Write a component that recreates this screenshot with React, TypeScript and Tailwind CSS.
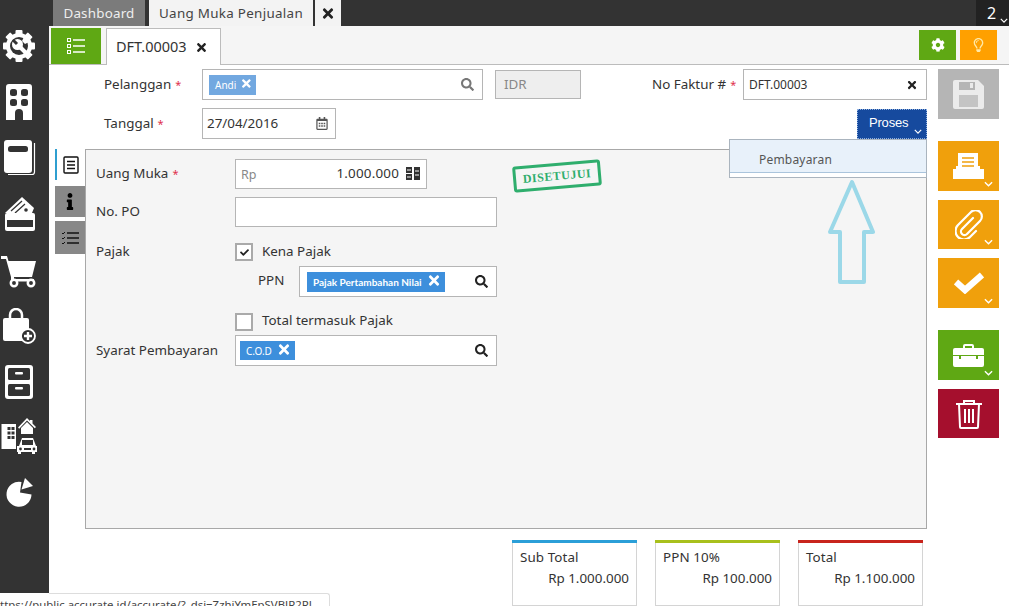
import { FC, ReactNode } from 'react';
import { FaTimes, FaSearch, FaCog, FaRegLightbulb, FaCheck, FaInfo, FaRegCalendarAlt } from 'react-icons/fa';

const D = '#333333';

const Gear: FC = () => (
  <svg viewBox="0 0 36 36" className="w-[36px] h-[36px]" fill="#fff">
    {[0, 45, 90, 135, 180, 225, 270, 315].map((a) => (
      <rect key={a} x="14.500" y="2" width="7" height="7" rx="1" transform={`rotate(${a} 18 18)`} />
    ))}
    <circle cx="18" cy="18" r="13" />
    <circle cx="18" cy="18" r="9" fill={D} />
    <circle cx="16.500" cy="16.500" r="5.500" />
    <path d="M17 17l8 8" stroke="#fff" strokeWidth="4" />
    <path d="M12 12l4 4" stroke={D} strokeWidth="3" />
    <path d="M23 9l5 5-4 2-3-3z" />
  </svg>
);

const Building: FC = () => (
  <svg viewBox="0 0 36 36" className="w-[36px] h-[36px]">
    <path d="M8 0h20a3 3 0 0 1 3 3v33H22v-7a4 4 0 0 0-8 0v7H5V3a3 3 0 0 1 3-3z" fill="#fff" />
    <rect x="9" y="5" width="7" height="7" rx="2.500" fill={D} />
    <rect x="20" y="5" width="7" height="7" rx="2.500" fill={D} />
    <rect x="9" y="15" width="7" height="7" rx="2.500" fill={D} />
    <rect x="20" y="15" width="7" height="7" rx="2.500" fill={D} />
  </svg>
);

const Book: FC = () => (
  <svg viewBox="0 0 36 36" className="w-[36px] h-[36px]">
    <path d="M6 0h22a3 3 0 0 1 3 3v27a3 3 0 0 1-3 3H6a3 3 0 0 1-3-3V3a3 3 0 0 1 3-3z" fill="#fff" />
    <rect x="7" y="6" width="20" height="6" rx="2.500" fill={D} />
    <path d="M33.500 3v29a2.500 2.500 0 0 1-2.500 2.500H7" stroke="#fff" strokeWidth="1.200" fill="none" />
  </svg>
);

const Wallet: FC = () => (
  <svg viewBox="0 0 36 36" className="w-[36px] h-[36px]">
    <path d="M4 17L21 1l12 11-2 5z" fill="#fff" />
    <path d="M10 15L21 5M14 17l10-9" stroke={D} strokeWidth="1.300" />
    <circle cx="25" cy="14" r="1.800" fill={D} />
    <path d="M6 17h26a2 2 0 0 1 2 2v14a2 2 0 0 1-2 2H6a2 2 0 0 1-2-2V19a2 2 0 0 1 2-2z" fill="#fff" />
    <rect x="6" y="24" width="26" height="7" fill={D} />
  </svg>
);

const Cart: FC = () => (
  <svg viewBox="0 0 36 36" className="w-[36px] h-[36px]" fill="#fff">
    <path d="M0 4h6l1.500 5H35l-4 16H13v2h20v2.500H10V25L5 7H0z" />
    <circle cx="13" cy="31" r="3.200" fill={D} stroke="#fff" strokeWidth="2.500" />
    <circle cx="30" cy="31" r="3.200" fill={D} stroke="#fff" strokeWidth="2.500" />
  </svg>
);

const Bag: FC = () => (
  <svg viewBox="0 0 36 36" className="w-[36px] h-[36px]">
    <path d="M9 10V7a6 6 0 0 1 12 0v3" stroke="#fff" strokeWidth="2.500" fill="none" />
    <path d="M4 10h22a2 2 0 0 1 2 2v21H4a2 2 0 0 1-2-2V12a2 2 0 0 1 2-2z" fill="#fff" />
    <circle cx="27" cy="28" r="7" fill={D} stroke="#fff" strokeWidth="1.800" />
    <path d="M27 24v8M23 28h8" stroke="#fff" strokeWidth="2.400" />
  </svg>
);

const Cabinet: FC = () => (
  <svg viewBox="0 0 36 36" className="w-[36px] h-[36px]">
    <rect x="4" y="1" width="28" height="34" rx="3" fill="#fff" />
    <rect x="7" y="4" width="22" height="12" rx="1.500" fill={D} />
    <rect x="7" y="20" width="22" height="12" rx="1.500" fill={D} />
    <rect x="14" y="8" width="8" height="2.500" rx="1" fill="#fff" />
    <rect x="14" y="23" width="8" height="2.500" rx="1" fill="#fff" />
  </svg>
);

const Assets: FC = () => (
  <svg viewBox="0 0 36 36" className="w-[36px] h-[36px] overflow-visible" fill="#fff">
    <rect x="0.500" y="4" width="14.500" height="25" />
    {[6.500, 10.500].map((x) =>
      [7, 11.500, 16].map((y) => <rect key={`${x}-${y}`} x={x} y={y} width="3" height="3" fill={D} />),
    )}
    <path d="M17 7.500L26 -2l3 3v-1h2.500v3.500l3.500 3.500-1.200 1.200L26 0.500 18.200 8.700z" />
    <path d="M20 8l6-6 6 6v6H20z" />
    <path d="M21 18h11l3 8h1v6h-2v2h-3v-2H20v2h-3v-2h-1v-6h2z" />
    <rect x="21" y="20" width="11" height="5" fill={D} />
    <circle cx="19.500" cy="29" r="1.400" fill={D} />
    <circle cx="33" cy="29" r="1.400" fill={D} />
    <rect x="23" y="28" width="7" height="2" fill={D} />
  </svg>
);

const Pie: FC = () => (
  <svg viewBox="0 0 36 36" className="w-[36px] h-[36px]" fill="#fff">
    <path d="M19 16.500L20.500 6A12.500 12.500 0 1 0 30.500 18.500z" />
    <path d="M20.500 13.500L24 2l8 8z" />
  </svg>
);

const Chevron: FC<{ className?: string }> = ({ className }) => (
  <svg viewBox="0 0 10 6" className={className} fill="none" stroke="#fff" strokeWidth="1.500">
    <path d="M1 1l4 4 4-4" />
  </svg>
);

const ListIcon: FC<{ color: string; size: number }> = ({ color, size }) => (
  <svg viewBox="0 0 18 16" width={size} height={(size * 16) / 18} fill="none" stroke={color}>
    <rect x=".5" y=".5" width="3" height="3" strokeWidth="1" />
    <rect x=".5" y="6.500" width="3" height="3" strokeWidth="1" />
    <rect x=".5" y="12.500" width="3" height="3" strokeWidth="1" />
    <path d="M6 2h12M6 8h12M6 14h12" strokeWidth="1.500" />
  </svg>
);

const ActionBtn: FC<{ bg: string; h: string; chevron?: boolean; children: ReactNode }> = ({ bg, h, chevron = true, children }) => (
  <div className={`relative w-[61px] flex items-center justify-center ${bg} ${h}`}>
    {children}
    {chevron && <Chevron className="absolute right-[6px] bottom-[4px] w-[9px] h-[6px]" />}
  </div>
);

const Req: FC = () => <span className="text-[#e0314b] ml-[4px] text-[11px]">*</span>;

const Tag: FC<{ label: string; bg: string; textClass?: string; className?: string }> = ({ label, bg, textClass = 'text-[10px]', className }) => (
  <div className={`h-[20px] flex items-center pl-[6px] pr-[5px] text-white ${bg} ${className ?? ''}`}>
    <span className={`${textClass} mt-[2px]`}>{label}</span>
    <FaTimes className="w-[12px] h-[15px] ml-[6px] mb-[3px]" />
  </div>
);

const Card: FC<{ title: string; value: string; color: string }> = ({ title, value, color }) => (
  <div className="w-[125px] h-[66px] bg-white border border-[#d4d4d4] border-t-0">
    <div className={`h-[3px] -mx-px ${color}`} />
    <div className="pl-[7px] pt-[5px] text-[#333] leading-[18px] tracking-[0.1px]">{title}</div>
    <div className="text-right pr-[7px] mt-[3px] text-[#333] leading-[18px]">{value}</div>
  </div>
);

export default function App() {
  return (
    <div className="relative w-[1014px] h-[606px] overflow-hidden bg-white text-[13.400px] text-[#222] font-['Noto_Sans','Open_Sans',sans-serif]">
      <div className="w-[1009px]">
        {/* top tabs */}
        <div className="h-[26px] bg-[#333] flex pl-[53px]">
          <div className="w-[92px] bg-[#7b7b7b] text-[#eee] flex items-center justify-center tracking-[0.2px]">Dashboard</div>
          <div className="w-[164px] ml-[4px] bg-[#f3f3f3] text-[#444] flex items-center justify-center tracking-[0.3px]">Uang Muka Penjualan</div>
          <div className="w-[26px] ml-[2px] bg-[#f3f3f3] flex items-center justify-center">
            <FaTimes className="w-[12px] h-[15px] text-[#222]" />
          </div>
          <div className="ml-auto w-[33px] bg-[#222] text-white flex items-start pl-[11px] pt-[1px] text-[16px] relative">
            2
            <Chevron className="absolute right-[1px] bottom-[3px] w-[8px] h-[5px]" />
          </div>
        </div>

        <div className="flex h-[580px]">
          {/* sidebar */}
          <div className="w-[49px] h-[567px] bg-[#333] flex flex-col items-start gap-[20px] pl-[1px] pt-[2px] shrink-0">
            <Gear />
            <Building />
            <Book />
            <Wallet />
            <Cart />
            <Bag />
            <Cabinet />
            <Assets />
            <Pie />
          </div>

          <div className="flex-1 min-w-0">
            {/* toolbar strip */}
            <div className="h-[39px] bg-[#f5f5f5] border-b border-[#bcbcbc] flex items-start pl-[2px] pt-[2px]">
              <div className="w-[50px] h-[36px] bg-[#5fa814] flex items-center justify-center">
                <ListIcon color="#fff" size={18} />
              </div>
              <div className="ml-[5px] w-[115px] h-[37px] bg-white border border-[#bcbcbc] border-b-0 flex items-center pl-[9px]">
                <span className="text-[#333] text-[14.500px]">DFT.00003</span>
                <FaTimes className="ml-[9px] w-[11px] h-[13px] text-[#222]" />
              </div>
              <div className="ml-auto flex gap-[4px] mr-[12px] mt-[2px]">
                <div className="w-[37px] h-[30px] bg-[#5fa814] flex items-center justify-center">
                  <FaCog className="w-[14px] h-[14px] text-white" />
                </div>
                <div className="w-[37px] h-[30px] bg-[#ffa000] flex items-center justify-center">
                  <FaRegLightbulb className="w-[13px] h-[14px] text-[#ffe9a8]" />
                </div>
              </div>
            </div>

            <div className="flex">
              <div className="w-[889px] shrink-0">
                {/* header fields */}
                <div className="flex items-center h-[31px] mt-[4px] pl-[55px]">
                  <div className="w-[98px] text-[#333]">Pelanggan<Req /></div>
                  <div className="w-[281px] h-[31px] bg-white border border-[#b5b5b5] flex items-center pl-[6px] pr-[8px] justify-between">
                    <Tag label="Andi" bg="bg-[#72a8e0]" className="w-[47px]" />
                    <FaSearch className="w-[13px] h-[13px] text-[#777]" />
                  </div>
                  <div className="ml-[12px] w-[86px] h-[29px] bg-[#eee] border border-[#b5b5b5] flex items-center pl-[8px] text-[#888]">IDR</div>
                  <div className="ml-[71px] w-[91px] text-[#333] whitespace-nowrap">No Faktur #<Req /></div>
                  <div className="w-[184px] h-[31px] bg-white border border-[#b5b5b5] flex items-center pl-[5px] pr-[9px] justify-between">
                    <span className="text-[12px] text-[#333]">DFT.00003</span>
                    <FaTimes className="w-[10px] h-[12px] text-[#222]" />
                  </div>
                </div>
                <div className="flex items-center h-[31px] mt-[8px] pl-[55px]">
                  <div className="w-[98px] text-[#333]">Tanggal<Req /></div>
                  <div className="w-[134px] h-[31px] bg-white border border-[#b5b5b5] flex items-center pl-[4px] pr-[7px] justify-between">
                    <span className="text-[#333]">27/04/2016</span>
                    <FaRegCalendarAlt className="w-[12px] h-[13px] text-[#555]" />
                  </div>
                  <div className="ml-[521px] relative w-[70px] h-[30px] bg-[#164a9e] outline-1 outline-dotted outline-[#8fb0e0] -outline-offset-1 flex items-start pt-[5px] pl-[12px] text-white text-[13px] leading-[18px] tracking-[-0.2px] font-['Liberation_Sans',sans-serif]">
                    Proses
                    <Chevron className="absolute right-[5px] bottom-[5px] w-[8px] h-[5px]" />
                  </div>
                </div>

                {/* main panel */}
                <div className="flex mt-[10px] pl-[6px]">
                  <div className="w-[30px] shrink-0 flex flex-col">
                    <div className="h-[31px] bg-white border-l-2 border-[#2f9fd0] flex items-center justify-center">
                      <svg viewBox="0 0 16 18" width="16" height="18" fill="none" stroke="#111" strokeWidth="1.400">
                        <rect x="1" y="1" width="14" height="16" rx="1" />
                        <path d="M4 5.500h8M4 9h8M4 12.500h8" />
                      </svg>
                    </div>
                    <div className="h-[31px] mt-[6px] bg-[#888] flex items-center justify-center">
                      <FaInfo className="w-[10px] h-[17px] text-black" />
                    </div>
                    <div className="h-[33px] mt-[4px] bg-[#888] flex items-center justify-center">
                      <svg viewBox="0 0 18 14" width="18" height="14" fill="none" stroke="#111">
                        <path d="M6 2h12M6 7h12M6 12h12" strokeWidth="1.500" />
                        <path d="M1 2l1 1 2-2M1 7l1 1 2-2M1 12l1 1 2-2" strokeWidth="1" />
                      </svg>
                    </div>
                  </div>

                  <div className="relative w-[842px] h-[380px] bg-[#f5f5f5] border border-[#a8a8a8] pl-[10px] pt-[9px]">
                    <div className="flex items-center h-[30px]">
                      <div className="w-[139px] text-[#333] mb-[2px]">Uang Muka<Req /></div>
                      <div className="w-[192px] h-[30px] bg-[#fff] border border-[#b5b5b5] flex items-center pl-[5px] pr-[6px]">
                        <span className="text-[#888] mt-[2px] text-[12.500px]">Rp</span>
                        <span className="ml-auto mb-[2px] text-[#333] tracking-[0.2px]">1.000.000</span>
                        <svg viewBox="0 0 14 13" width="14" height="13" className="ml-[7px] mb-[2px]" fill="#333">
                          <rect x="0" y="0" width="6" height="6" />
                          <rect x="0" y="7" width="6" height="6" />
                          <rect x="8" y="0" width="6" height="13" />
                          <path d="M9 4h4M9 8h4" stroke="#fff" />
                          <path d="M1 3h4M1 10h4" stroke="#fff" />
                        </svg>
                      </div>
                    </div>
                    <div className="flex items-center h-[30px] mt-[8px]">
                      <div className="w-[139px] text-[#333] mb-[2px]">No. PO</div>
                      <div className="w-[262px] h-[30px] bg-white border border-[#b5b5b5]" />
                    </div>
                    <div className="flex items-center h-[18px] mt-[16px]">
                      <div className="w-[139px] text-[#333] mb-[2px]">Pajak</div>
                      <div className="w-[18px] h-[18px] bg-white border-2 border-[#aaa] flex items-center justify-center">
                        <FaCheck className="w-[9px] h-[9px] text-[#222]" />
                      </div>
                      <span className="ml-[9px] mb-[2px] text-[#333]">Kena Pajak</span>
                    </div>
                    <div className="flex items-center h-[31px] mt-[5px] pl-[162px]">
                      <div className="w-[41px] text-[#333] mb-[2px]">PPN</div>
                      <div className="w-[198px] h-[31px] bg-white border border-[#b5b5b5] flex items-center pl-[7px] pr-[8px] justify-between">
                        <Tag label="Pajak Pertambahan Nilai" bg="bg-[#3d8fdc]" textClass="text-[10px] font-bold font-['Lato',sans-serif] whitespace-nowrap" />
                        <FaSearch className="w-[13px] h-[13px] text-[#222]" />
                      </div>
                    </div>
                    <div className="flex items-center h-[18px] mt-[16px] pl-[139px]">
                      <div className="w-[18px] h-[18px] bg-white border-2 border-[#aaa]" />
                      <span className="ml-[9px] mb-[4px] text-[#333]">Total termasuk Pajak</span>
                    </div>
                    <div className="flex items-center h-[31px] mt-[4px]">
                      <div className="w-[139px] text-[#333] whitespace-nowrap">Syarat Pembayaran</div>
                      <div className="w-[262px] h-[31px] bg-white border border-[#b5b5b5] flex items-center pl-[4px] pr-[8px] justify-between">
                        <Tag label="C.O.D" bg="bg-[#3d8fdc]" className="!h-[19px]" />
                        <FaSearch className="w-[13px] h-[13px] text-[#222]" />
                      </div>
                    </div>

                    {/* stamp */}
                    <div className="absolute left-[427px] top-[13px] w-[88px] h-[26px] border-[3px] border-[#2fae6d] rounded-[3px] -rotate-[5deg] flex items-center justify-center text-[#2fae6d] text-[12px] font-bold tracking-[0.5px] font-['Liberation_Serif',serif]">
                      DISETUJUI
                    </div>
                  </div>
                </div>

                {/* totals */}
                <div className="flex gap-[18px] mt-[11px] pl-[463px]">
                  <Card title="Sub Total" value="Rp 1.000.000" color="bg-[#2b9fd8]" />
                  <Card title="PPN 10%" value="Rp 100.000" color="bg-[#a8c01c]" />
                  <Card title="Total" value="Rp 1.100.000" color="bg-[#c8241c]" />
                </div>
              </div>

              {/* right actions */}
              <div className="w-[61px] flex flex-col mt-[4px]">
                <ActionBtn bg="bg-[#b5b5b5]" h="h-[50px]" chevron={false}>
                  <svg viewBox="0 0 31 29" width="31" height="29">
                    <path d="M2 0h23l6 6v21a2 2 0 0 1-2 2H2a2 2 0 0 1-2-2V2a2 2 0 0 1 2-2z" fill="#ebebeb" />
                    <rect x="6" y="2" width="16" height="8" fill="#b5b5b5" />
                    <rect x="17" y="3" width="3" height="5" fill="#ebebeb" />
                    <rect x="6" y="15" width="19" height="12" fill="#c4c4c4" />
                  </svg>
                </ActionBtn>
                <div className="mt-[22px]">
                  <ActionBtn bg="bg-[#f0a00c]" h="h-[50px]">
                    <svg viewBox="0 0 31 26" width="31" height="26" fill="#fff">
                      <path d="M5 0h20v20H5z" />
                      <path d="M9 5h12M9 9h12M9 13h12" stroke="#f0a00c" strokeWidth="1.500" />
                      <path d="M0 16h3v-3h2v7h20v-7h2v3h4v10H0z" />
                    </svg>
                  </ActionBtn>
                </div>
                <div className="mt-[9px]">
                  <ActionBtn bg="bg-[#f0a00c]" h="h-[49px]">
                    <svg viewBox="0 0 28 29" width="28" height="29" fill="none" stroke="#fff" strokeWidth="2.200" strokeLinecap="round">
                      <path d="M18 8L7 19a3.500 3.500 0 0 0 5 5L25 11a6 6 0 0 0-9-9L3 15a8 8 0 0 0 12 12l6-6" />
                    </svg>
                  </ActionBtn>
                </div>
                <div className="mt-[9px]">
                  <ActionBtn bg="bg-[#f0a00c]" h="h-[50px]">
                    <svg viewBox="0 0 30 22" width="30" height="22" fill="none" stroke="#fff" strokeWidth="6.500">
                      <path d="M2 10l9 8L28 3" />
                    </svg>
                  </ActionBtn>
                </div>
                <div className="mt-[22px]">
                  <ActionBtn bg="bg-[#5fa814]" h="h-[50px]">
                    <svg viewBox="0 0 31 23" width="31" height="23" fill="#fff">
                      <path d="M10 5V2a2 2 0 0 1 2-2h7a2 2 0 0 1 2 2v3h-2V2h-7v3z" />
                      <path d="M2 4h27a2 2 0 0 1 2 2v5H0V6a2 2 0 0 1 2-2z" />
                      <path d="M0 12h6v3h2v-3h15v3h2v-3h6v9a2 2 0 0 1-2 2H2a2 2 0 0 1-2-2z" />
                    </svg>
                  </ActionBtn>
                </div>
                <div className="mt-[9px]">
                  <ActionBtn bg="bg-[#a50f2d]" h="h-[49px]" chevron={false}>
                    <svg viewBox="0 0 28 30" width="28" height="30" fill="none" stroke="#fff" strokeWidth="2">
                      <path d="M1 5h26M9 5V2h10v3" />
                      <path d="M4 5l1 23a1 1 0 0 0 1 1h16a1 1 0 0 0 1-1l1-23" />
                      <path d="M10 10v14M14 10v14M18 10v14" />
                    </svg>
                  </ActionBtn>
                </div>
              </div>
            </div>
          </div>
        </div>
      </div>

      {/* dropdown menu */}
      <div className="absolute left-[729px] top-[139px] w-[198px] h-[39px] bg-white border border-[#aab4be]">
        <div className="h-[33px] bg-[#e8f1fa] border-b border-[#aac4dc] flex items-center pl-[29px] pt-[7px] text-[12px] text-[#555] tracking-[0.2px]">
          Pembayaran
        </div>
      </div>

      {/* annotation arrow */}
      <svg className="absolute left-[825px] top-[177px]" width="54" height="110" viewBox="825 177 54 110" fill="none" stroke="#9bd8e8" strokeWidth="4" strokeLinejoin="round">
        <path d="M852 182l21 50h-9v50h-24v-50h-10z" />
      </svg>

      {/* link status */}
      <div className="absolute left-[49px] bottom-0 w-[281px] h-[13px] bg-white border-t border-r border-[#ddd] rounded-tr-[3px]" />
      <div className="absolute left-[-7px] bottom-0 h-[8px] overflow-hidden text-[11.400px] leading-[14px] text-[#444] whitespace-nowrap">
        https://public.accurate.id/accurate/?_dsi=ZzhjYmEpSVBJR2RJ
      </div>
    </div>
  );
}
